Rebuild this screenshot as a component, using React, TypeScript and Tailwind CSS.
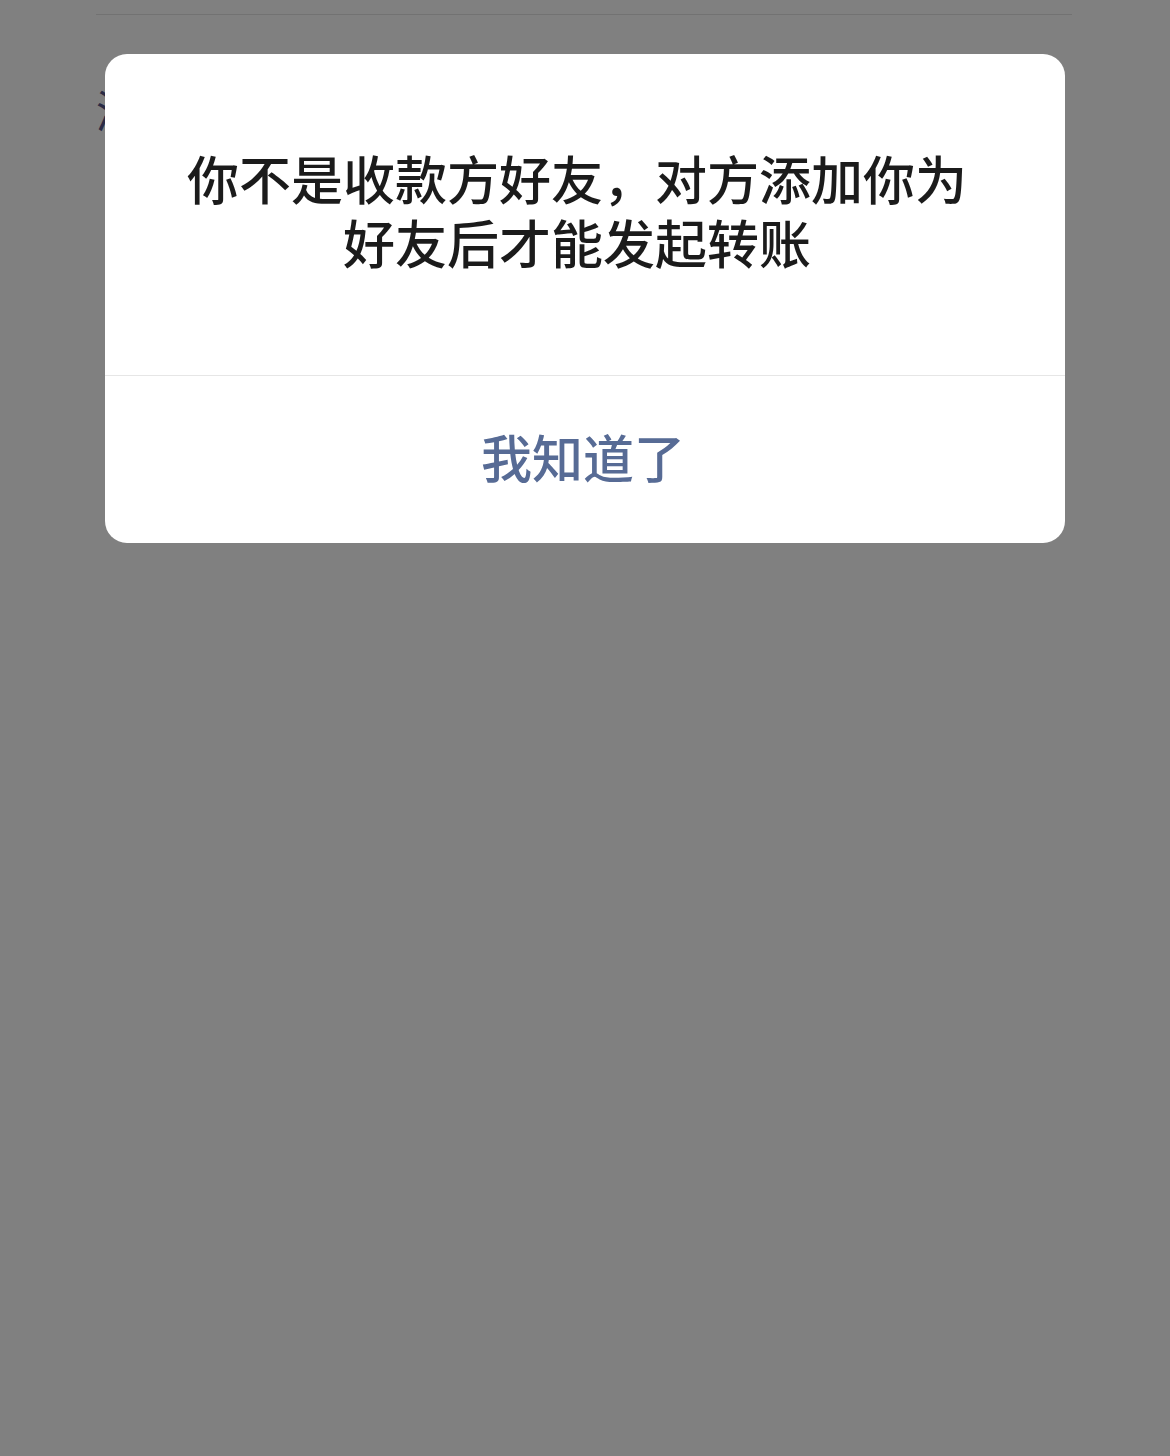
export default function App() {
  return (
    <div
      className="relative min-h-[1456px] w-full bg-[#808080] overflow-hidden"
      style={{ fontFamily: '"Noto Sans CJK SC", "Noto Sans", sans-serif' }}
    >
      {/* page behind the mask */}
      <div className="pl-[96px] pr-[98px] pt-[14px]">
        <div className="h-px bg-[#727272]" />
        <div className="mt-[68px] text-[44px] leading-[52px] text-[#2b2b45]">添加</div>
      </div>

      {/* dialog */}
      <div className="absolute top-[54px] left-[105px] w-[960px] rounded-[22px] bg-white overflow-hidden">
        <div className="pl-[52px] pr-[68px] pt-[92px] pb-[101px] text-center text-[52px] leading-[64px] font-medium text-[#1b1b1b]">
          你不是收款方好友，对方添加你为
          <br />
          好友后才能发起转账
        </div>
        <div className="h-px bg-[#e6e6e6]" />
        <div className="h-[167px] pb-[6px] pr-[4px] flex items-center justify-center text-[51px] font-medium text-[#576b95]">
          我知道了
        </div>
      </div>
    </div>
  );
}
